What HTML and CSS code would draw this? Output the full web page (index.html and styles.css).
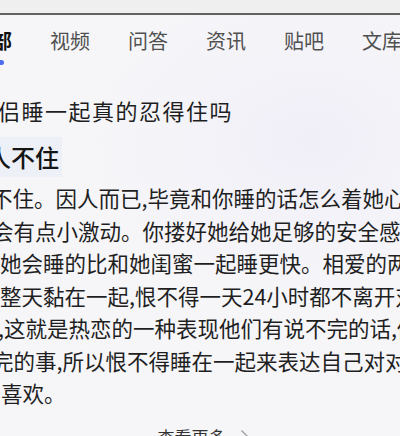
FILE: index.html
```html
<!DOCTYPE html>
<html lang="zh-CN">
<head>
<meta charset="utf-8">
<title>和情侣睡一起真的忍得住吗</title>
<link rel="stylesheet" href="styles.css">
</head>
<body>
<div class="page">
  <div class="topbar"></div>
  <nav class="tabs">
    <span class="tab active">全部</span>
    <span class="tab">视频</span>
    <span class="tab">问答</span>
    <span class="tab">资讯</span>
    <span class="tab">贴吧</span>
    <span class="tab">文库</span>
  </nav>
  <h1 class="title">侣睡一起真的忍得住吗</h1>
  <div class="answer-head"><span>人不住</span></div>
  <div class="answer">
    <div class="line cut">不住。因人而已,毕竟和你睡的话怎么着她心里</div>
    <div class="line cut-s">会有点小激动。你搂好她给她足够的安全感受</div>
    <div class="line">她会睡的比和她闺蜜一起睡更快。相爱的两个人</div>
    <div class="line">整天黏在一起,恨不得一天24小时都不离开对方</div>
    <div class="line comma">,这就是热恋的一种表现他们有说不完的话,做不</div>
    <div class="line cut-s">完的事,所以恨不得睡在一起来表达自己对对方</div>
    <div class="line tail">喜欢。</div>
  </div>
  <div class="more">
    <span>查看更多</span>
    <svg class="chev" width="9" height="15" viewBox="0 0 9 15"><path d="M1.5 1.5 L7.5 7.5 L1.5 13.5" fill="none" stroke="#9a9a9a" stroke-width="1.3"/></svg>
  </div>
</div>
</body>
</html>
```

FILE: styles.css
```css
html, body {
  margin: 0;
  padding: 0;
}
body {
  width: 400px;
  height: 436px;
  overflow: hidden;
  background: #f6f6f9;
  font-family: "Noto Sans CJK SC", "Noto Sans", sans-serif;
  color: #222;
}
.page {
  width: 400px;
  height: 436px;
  overflow: hidden;
  background: radial-gradient(ellipse 220px 160px at 310px 140px, #f0eff8 0%, rgba(246,246,249,0) 100%), #f6f6f9;
}
.topbar {
  height: 13px;
  background: #efefef;
  border-bottom: 2px solid #626262;
}
.tabs {
  display: flex;
  gap: 38px;
  margin-left: -28px;
  padding-top: 13px;
  white-space: nowrap;
}
.tab {
  font-size: 20px;
  line-height: 26px;
  color: #505050;
  position: relative;
}
.tab.active {
  color: #111;
  font-weight: 700;
}
.tab.active::after {
  content: "";
  position: absolute;
  left: 8px;
  width: 24px;
  bottom: -11px;
  height: 5px;
  border-radius: 3px;
  background: #4e6ef2;
}
.title {
  margin: 41px 0 0 -2px;
  font-size: 22px;
  line-height: 30px;
  font-weight: 400;
  letter-spacing: 1.5px;
  color: #1e1e1e;
  white-space: nowrap;
}
.answer-head {
  margin-top: 12px;
}
.answer-head span {
  display: inline-block;
  margin-left: -13px;
  padding: 5px 3px 5px 0;
  font-size: 24px;
  line-height: 30px;
  font-weight: 500;
  color: #151515;
  background: #eef0f8;
}
.answer {
  margin-top: 5px;
}
.line {
  font-size: 21.5px;
  line-height: 32.5px;
  white-space: nowrap;
  color: #1f1f1f;
}
.line.cut { text-indent: -9px; }
.line.cut-s { text-indent: -8px; }
.line.comma { text-indent: -2px; }
.line.tail { text-indent: 1px; }
.more {
  margin-top: 15px;
  display: flex;
  justify-content: center;
  align-items: center;
  gap: 14px;
  font-size: 17px;
  line-height: 24px;
  color: #333;
  padding-left: 6px;
}
.chev {
  display: block;
}
```
